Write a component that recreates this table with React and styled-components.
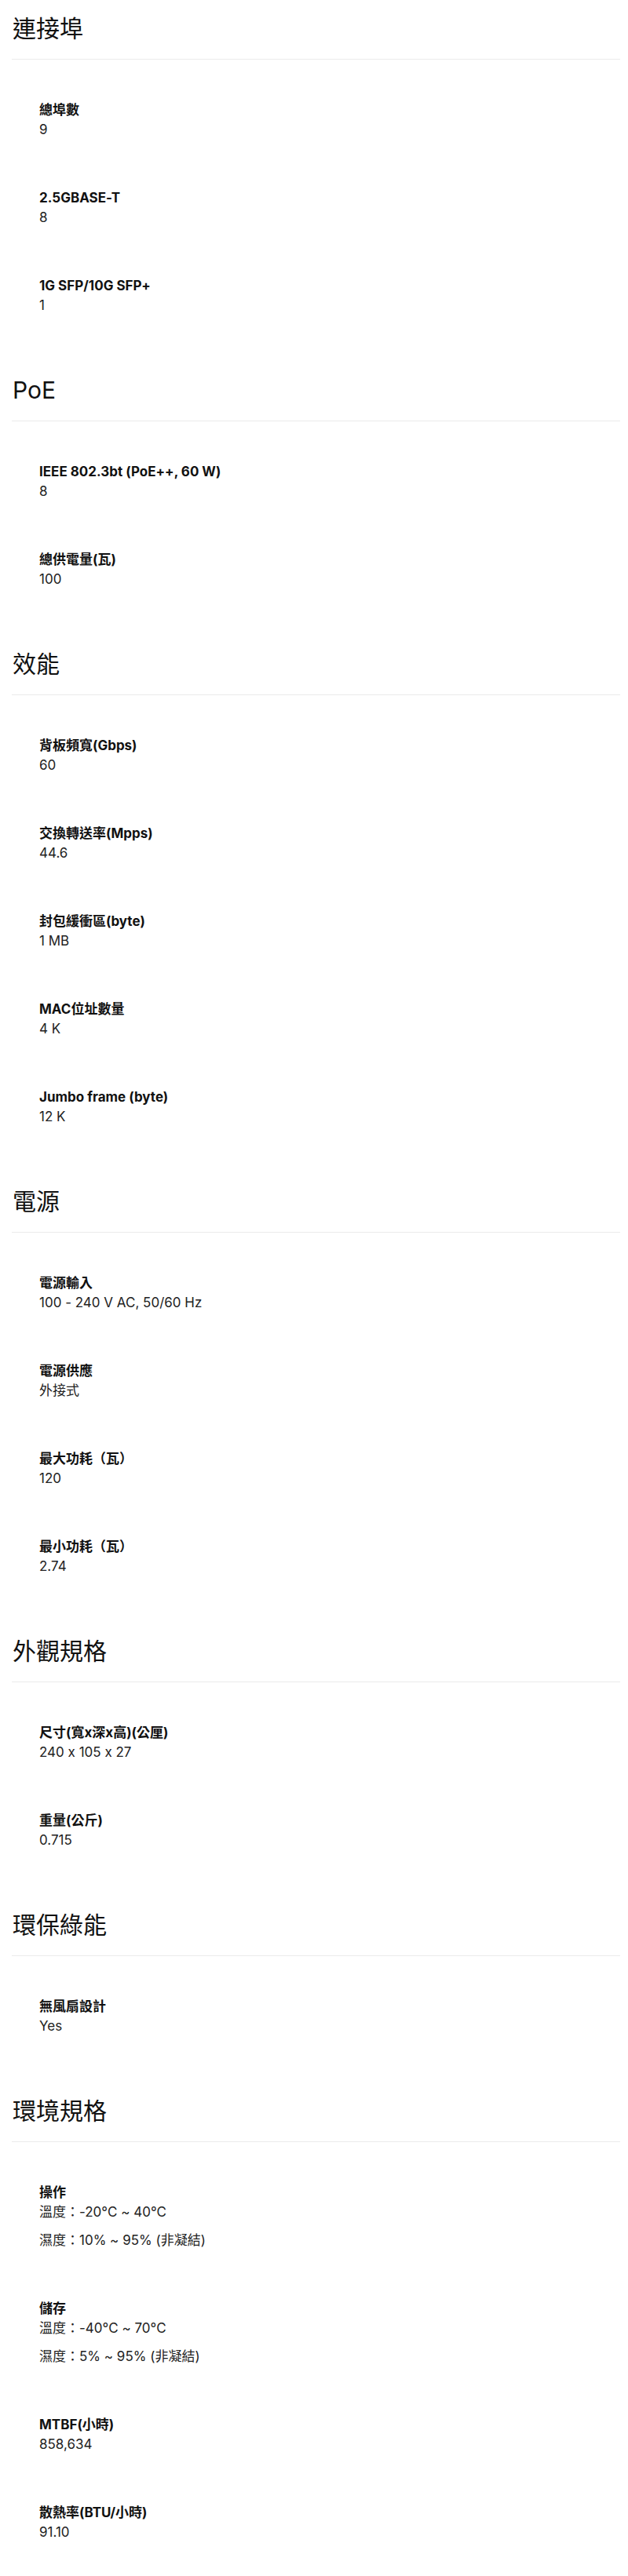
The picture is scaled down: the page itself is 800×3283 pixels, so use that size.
import React from "react";
import styled, { createGlobalStyle } from "styled-components";

const GlobalStyle = createGlobalStyle`
  html, body {
    margin: 0;
    padding: 0;
    background: #ffffff;
  }
  body {
    font-family: Inter, "Noto Sans CJK TC", "Noto Sans", sans-serif;
    font-feature-settings: "calt" 0;
    color: #111111;
    -webkit-font-smoothing: antialiased;
  }
`;

const Page = styled.div`
  padding: 16px 10px 10px 15px;
  display: flex;
  flex-direction: column;
  gap: 44px;
`;

const Section = styled.section`
  display: flex;
  flex-direction: column;
`;

const SectionTitle = styled.h2`
  margin: 0;
  padding: 0 0 19px 1px;
  font-size: 30px;
  line-height: 40px;
  font-weight: 400;
  color: #111111;
  border-bottom: 1px solid #ebebeb;
`;

const SpecList = styled.dl`
  margin: 0;
  padding: 21px 0 0 35px;
  display: flex;
  flex-direction: column;
`;

const SpecItem = styled.div`
  padding: 30px 0 32px;
  display: flex;
  flex-direction: column;
`;

const Label = styled.dt`
  margin: 0;
  font-size: 17px;
  line-height: 26px;
  font-weight: 700;
  color: #111111;
`;

const Value = styled.dd`
  margin: 0;
  display: flex;
  flex-direction: column;
  gap: 12px;
  font-size: 17px;
  line-height: 24px;
  font-weight: 400;
  color: #222222;
`;

const specs = [
  {
    title: "連接埠",
    items: [
      ["總埠數", ["9"]],
      ["2.5GBASE-T", ["8"]],
      ["1G SFP/10G SFP+", ["1"]],
    ],
  },
  {
    title: "PoE",
    items: [
      ["IEEE 802.3bt (PoE++, 60 W)", ["8"]],
      ["總供電量(瓦)", ["100"]],
    ],
  },
  {
    title: "效能",
    items: [
      ["背板頻寬(Gbps)", ["60"]],
      ["交換轉送率(Mpps)", ["44.6"]],
      ["封包緩衝區(byte)", ["1 MB"]],
      ["MAC位址數量", ["4 K"]],
      ["Jumbo frame (byte)", ["12 K"]],
    ],
  },
  {
    title: "電源",
    items: [
      ["電源輸入", ["100 - 240 V AC, 50/60 Hz"]],
      ["電源供應", ["外接式"]],
      ["最大功耗（瓦）", ["120"]],
      ["最小功耗（瓦）", ["2.74"]],
    ],
  },
  {
    title: "外觀規格",
    items: [
      ["尺寸(寬x深x高)(公厘)", ["240 x 105 x 27"]],
      ["重量(公斤)", ["0.715"]],
    ],
  },
  {
    title: "環保綠能",
    items: [["無風扇設計", ["Yes"]]],
  },
  {
    title: "環境規格",
    items: [
      ["操作", ["溫度：-20°C ~ 40°C", "濕度：10% ~ 95% (非凝結)"]],
      ["儲存", ["溫度：-40°C ~ 70°C", "濕度：5% ~ 95% (非凝結)"]],
      ["MTBF(小時)", ["858,634"]],
      ["散熱率(BTU/小時)", ["91.10"]],
    ],
  },
];

const App = () => {
  return (
    <>
      <GlobalStyle />
      <Page>
        {specs.map((section) => (
          <Section key={section.title}>
            <SectionTitle>{section.title}</SectionTitle>
            <SpecList>
              {section.items.map(([label, values]) => (
                <SpecItem key={label}>
                  <Label>{label}</Label>
                  <Value>
                    {values.map((v) => (
                      <span key={v}>{v}</span>
                    ))}
                  </Value>
                </SpecItem>
              ))}
            </SpecList>
          </Section>
        ))}
      </Page>
    </>
  );
};

export default App;
